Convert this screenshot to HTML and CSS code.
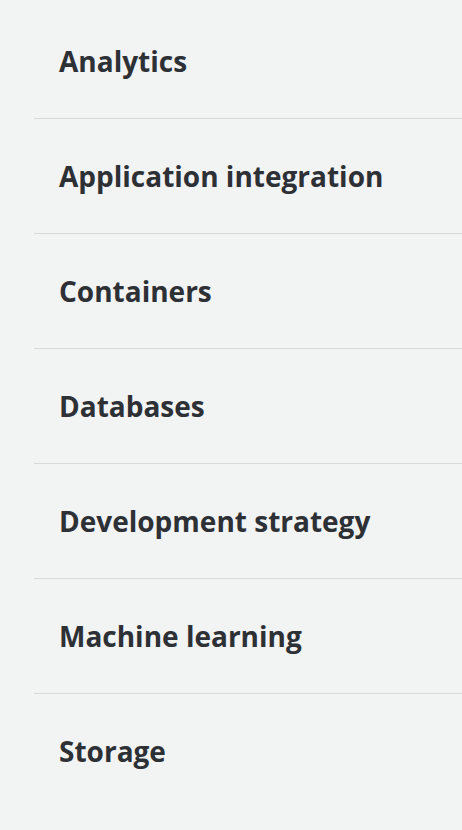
FILE: index.html
```html
<!DOCTYPE html>
<html lang="en">
<head>
<meta charset="utf-8">
<title>Categories</title>
<link rel="stylesheet" href="styles.css">
</head>
<body>
<ul class="list">
  <li class="item">Analytics</li>
  <li class="item">Application integration</li>
  <li class="item">Containers</li>
  <li class="item">Databases</li>
  <li class="item">Development strategy</li>
  <li class="item">Machine learning</li>
  <li class="item">Storage</li>
</ul>
</body>
</html>
```

FILE: styles.css
```css
html, body {
  margin: 0;
  padding: 0;
  background: #f2f3f3;
}
body {
  padding-top: 4px;
  font-family: "Open Sans", "Noto Sans", sans-serif;
}
.list {
  list-style: none;
  margin: 0 0 0 34px;
  padding: 0;
}
.item {
  height: 114px;
  display: flex;
  align-items: center;
  padding-left: 25px;
  border-bottom: 1px solid #d5dbdb;
  font-size: 28px;
  font-weight: 700;
  color: #2d3035;
}
.item:last-child {
  border-bottom: none;
}
```
